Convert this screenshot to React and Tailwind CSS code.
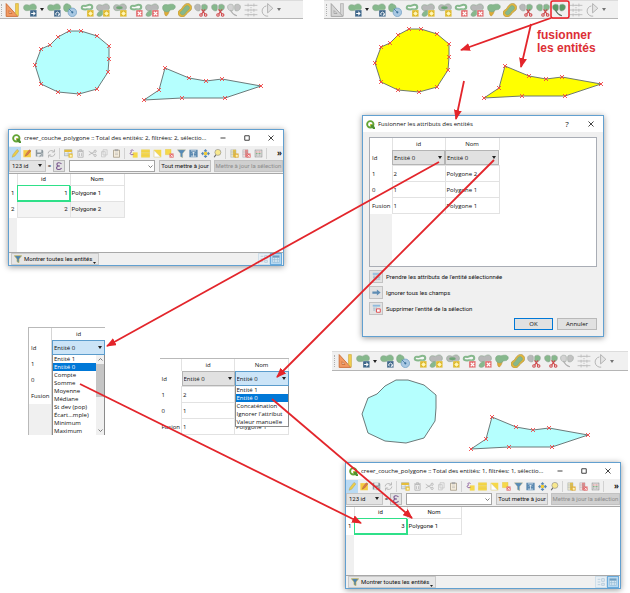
import React from "react";

const GREEN = "#86b88c";
const GREY = "#b8b8b8";

const circlePoints = [
  [35, 65], [41, 49], [50, 45], [58, 37], [69, 31], [81, 31], [97, 36],
  [109, 46], [109, 59], [108, 72], [97, 89], [79, 94], [58, 92], [41, 84],
];

const trianglePoints = [
  [144, 100], [159, 90], [165, 68], [189, 78], [206, 81], [222, 79],
  [261, 86], [225, 98], [182, 98],
];

const Shape = ({ points, fill, nodes = true }) => (
  <g>
    <polygon points={points.join(" ")} fill={fill} stroke="#5f6b6b" strokeWidth="0.9" />
    {nodes &&
      points.map(([x, y]) => (
        <path
          key={`${x}-${y}`}
          d={`M${x - 2} ${y - 2}l4 4M${x + 2} ${y - 2}l-4 4`}
          stroke="#f24545"
          strokeWidth="0.9"
        />
      ))}
  </g>
);

const MapCanvas = ({ className, viewBox, fill, circleNodes }) => (
  <svg className={`block ${className}`} viewBox={viewBox} preserveAspectRatio="xMinYMin meet">
    <Shape points={circlePoints} fill={fill} nodes={circleNodes} />
    <Shape points={trianglePoints} fill={fill} />
  </svg>
);

/* ---------- digitizing toolbar ---------- */

const Blob = ({ fill = GREEN, ring = false }) => (
  <path
    d={
      ring
        ? "M3 8c0-3 3-4 6-3 3 0 4-2 7-2 3 0 5 2 5 4s-2 4-5 4c-3-1-4 0-7 0s-6 0-6-3z"
        : "M1 8c0-5 4-6 8-4.500 3 1 4-1.500 8-2 4 0 6 3 6 6s-2 6-6 5c-3-.500-4 0-8 .500-4 .500-8-.500-8-5z"
    }
    fill={ring ? "#f7f7f7" : fill}
    stroke={ring ? fill : "#8aa78d"}
    strokeWidth={ring ? 3.5 : 1}
  />
);

const Badge = ({ color, children }) => (
  <g>
    <rect x="12" y="12" width="11.500" height="11.500" rx="1" fill={color} stroke="#f0f0f0" strokeWidth="0.600" />
    {children}
  </g>
);

const arrowMark = <path d="M14 18h6M17.500 15l3 3-3 3" stroke="#fff" strokeWidth="1.800" fill="none" />;
const turnMark = <path d="M16 21a3 3 0 1 1 4 0M18.500 21h2.500v-2.500" stroke="#fff" strokeWidth="1.600" fill="none" />;
const starMark = (
  <>
    <circle cx="18" cy="18" r="2.600" fill="#fff6b8" />
    <path d="M18 14v8M14 18h8M15.200 15.200l5.600 5.600M20.800 15.200l-5.600 5.600" stroke="#fff6b8" strokeWidth="1" />
  </>
);
const crossMark = <path d="M15 15l6 6M21 15l-6 6" stroke="#fff" strokeWidth="2" />;

const scissors = (
  <g fill="none" stroke="#cf4447" strokeWidth="1.800">
    <path d="M13 11l6 8M19 11l-6 8" />
    <circle cx="12" cy="20.500" r="2.200" />
    <circle cx="20" cy="20.500" r="2.200" />
  </g>
);

const twins = (left, right) => (
  <g stroke="#8f9a90" strokeWidth="0.800">
    <path d="M1 7c0-5 5-6 9-4 1.500 1 1 9 0 10-4 2-9-1-9-6z" fill={left} />
    <path d="M23 7c0-5-5-6-9-4-1.500 1-1 9 0 10 4 2 9-1 9-6z" fill={right} />
  </g>
);

const tail = (fill) => <path d="M6 14c3-2 7-1 7 1 0 4-3 8-7 8-4 0-5-2-4-4s2-4 4-5z" fill={fill} stroke="#8a9a8c" strokeWidth="0.800" />;

const digitizingTools = [
  { name: "Déplacer l'entité", art: <><Blob /><Badge color="#3f678a">{turnMark}</Badge></> },
  {
    name: "Pivoter l'entité",
    art: (
      <>
        <path d="M1 8c0-5 4-8 8-6 4 1 5 4 5 7s-3 6-7 6-6-3-6-7z" fill={GREEN} stroke="#7ba781" />
        <circle cx="16" cy="16" r="7.300" fill="#a9c8e2" stroke="#6b9cc4" strokeWidth="1.200" />
        <path d="M10 10l6 6" stroke="#39709b" strokeWidth="1.200" />
        <circle cx="16" cy="16" r="1.800" fill="#39709b" />
      </>
    ),
  },
  { name: "Ajouter un anneau", art: <><Blob ring /><Badge color="#dfb92a">{starMark}</Badge></> },
  { name: "Ajouter une partie", art: <><Blob fill={GREY} />{tail(GREEN)}<Badge color="#dfb92a">{starMark}</Badge></> },
  {
    name: "Remplir l'anneau",
    art: (
      <>
        <Blob fill={GREY} />
        <ellipse cx="11" cy="8" rx="5.500" ry="2.500" fill="#6fa675" />
        <Badge color="#dfb92a">{starMark}</Badge>
      </>
    ),
  },
  { name: "Effacer un anneau", art: <><Blob ring /><Badge color="#e3696b">{crossMark}</Badge></> },
  { name: "Effacer une partie", art: <><Blob fill={GREY} />{tail(GREEN)}<Badge color="#e3696b">{crossMark}</Badge></> },
  {
    name: "Remodeler les entités",
    art: (
      <>
        <path d="M4 9h9c0 5-2 10-5 13-4 1-4-7-4-13z" fill="#e0ac35" stroke="#b58c32" />
        <path d="M1 8c0-5 4-6 8-5 3 0 4-1 8-1 5 0 7 4 5 7s-4 2-8 3c-2 4-7 4-10 2-2-1-3-4-3-6z" fill={GREEN} stroke="#7ba781" />
      </>
    ),
  },
  {
    name: "Décaler la courbe",
    art: (
      <g transform="rotate(-45 12 12)">
        <path d="M-2 12c0-7 6-7 9-6s5-1 9-1 9 1 9 7-5 8-9 7-6 0-9 0-9 0-9-7z" fill="#e2b53a" stroke="#a98f3c" />
        <path d="M2 12c0-4 4-3 7-3s4-1 7-1 5 1 5 4-2 4-5 4-4-1-7 0-7 0-7-4z" fill={GREEN} stroke="#7ba781" />
      </g>
    ),
  },
  { name: "Séparer les entités", art: <>{twins(GREY, GREEN)}{scissors}</> },
  { name: "Séparer les parties", art: <>{twins(GREEN, GREEN)}{scissors}</> },
  { name: "Fusionner les entités", merge: true },
  {
    name: "Fusionner les attributs",
    art: (
      <g fill="none" stroke="#bcbcbc" strokeWidth="1.600">
        <path d="M1 4h22M1 12h22M1 20h22M7 1v5M17 1v5M7 10v5M17 10v5M7 18v5M17 18v5" />
        <path d="M12 3v18" strokeDasharray="2 2" />
      </g>
    ),
  },
  {
    name: "Pivoter les symboles",
    art: (
      <g fill="#e4e4e4" stroke="#b0b0b0" strokeWidth="1.600">
        <path d="M14 22.500A8.500 8.500 0 1 1 11 5" fill="none" />
        <path d="M13 1l9 8-9 8z" />
      </g>
    ),
  },
];

const mergeArt = (active) => (
  <>
    {twins(active ? "#5b9a66" : "#d2d2d2", active ? "#5b9a66" : "#c2c2c2")}
    <path d="M6 12c2 5 5 8 11 10" fill="none" stroke={active ? "#5a6b5c" : "#adadad"} strokeWidth="1.800" />
  </>
);

const ToolButton = ({ name, children }) => (
  <button aria-label={name} className="shrink-0">
    <svg className="block size-[14px]" viewBox="0 0 24 24">{children}</svg>
  </button>
);

const Caret = () => (
  <svg className="block h-[3px] w-1 shrink-0" viewBox="0 0 8 6"><path d="M0 0h8L4 6z" fill="#222" /></svg>
);

const DigitizingToolbar = ({ className, rulerOff = false, mergeOn = false }) => (
  <div
    role="toolbar"
    aria-label="Numérisation avancée"
    className={`flex items-center border-t border-b border-t-[#dcdcdc] border-b-[#b5b5b5] bg-[#f0f0f0] ${className}`}
  >
    <span className="mr-[3px] h-3 border-l border-dotted border-[#b0b0b0]" />
    <ToolButton name="Outils de numérisation">
      <path
        d="M2 1v22h20z M7 13v5h5z"
        fill={rulerOff ? "#d5d5d5" : "#f29a62"}
        stroke={rulerOff ? "#a0a0a0" : "#c96b35"}
        strokeWidth="1.500"
        fillRule="evenodd"
      />
      <path
        d="M18 1h5v21h-1l-4-4z"
        fill={rulerOff ? "#d5d5d5" : "#f2cd4e"}
        stroke={rulerOff ? "#a0a0a0" : "#c8a53b"}
      />
    </ToolButton>
    <div className="mr-[3px] ml-1 flex items-center gap-[3px]">
      <ToolButton name="Copier et déplacer l'entité"><Blob /><Badge color="#3f678a">{arrowMark}</Badge></ToolButton>
      <Caret />
    </div>
    <div className="flex flex-1 items-center justify-between">
      {digitizingTools.map((tool) => (
        <ToolButton key={tool.name} name={tool.name}>
          {tool.merge ? mergeArt(mergeOn) : tool.art}
        </ToolButton>
      ))}
    </div>
    <span className="ml-[3px] opacity-60"><Caret /></span>
  </div>
);

/* ---------- attribute table window ---------- */

const tableTools = [
  { name: "Mode édition", on: true, art: <path d="M3 22l2-7L16 1l5 4L10 19z" fill="#ecce48" stroke="#a8944a" /> },
  {
    name: "Édition multiple",
    art: (
      <>
        <rect x="1" y="3" width="20" height="19" fill="#f5cb42" />
        <path d="M6 19l2-6 9-11 4 3-9 11z" fill="#dc7a4c" stroke="#9a5a3c" />
      </>
    ),
  },
  {
    name: "Enregistrer",
    art: (
      <>
        <path d="M2 2h18l2 3v15H2z" fill="#8a969c" />
        <path d="M6 2h11v7H6zM6 13h12v7H6z" fill="#e5e9eb" />
        <path d="M10 22l2-5 7-6 3 3-7 7z" fill="#9aa4a9" stroke="#f0f0f0" />
      </>
    ),
  },
  {
    name: "Actualiser",
    art: (
      <g fill="none" stroke="#b8b8b8" strokeWidth="2.500">
        <path d="M3 12a9 8 0 0 1 16-5M21 12a9 8 0 0 1-16 5" />
        <path d="M20 1v7h-7M4 23v-7h7" />
      </g>
    ),
    sep: true,
  },
  {
    name: "Ajouter une entité",
    art: (
      <>
        <path d="M1 2h20v16H1z" fill="#e8edf0" stroke="#8b9ba5" strokeWidth="1.500" />
        <path d="M1 2h20v6H1z" fill="#e6bd3a" />
        <path d="M2 13h19M11 8v10" stroke="#8b9ba5" />
        <path d="M12 12h11v11H12z" fill="#e6bd3a" />
        {starMark}
      </>
    ),
  },
  {
    name: "Supprimer",
    art: <path d="M5 7h14v15H5zM3 5h18M9 4V2h6v3M9 11v8M15 11v8" fill="none" stroke="#adadad" strokeWidth="2" />,
  },
  {
    name: "Couper",
    art: (
      <g fill="none" stroke="#adadad" strokeWidth="2">
        <path d="M2 6l14 9M2 16l14-8" />
        <circle cx="19" cy="6" r="3" />
        <circle cx="19" cy="17" r="3" />
      </g>
    ),
  },
  { name: "Copier", art: <path d="M8 2h11v14H8zM4 7h10v14H4z" fill="#efefef" stroke="#c0c0c0" strokeWidth="1.800" /> },
  {
    name: "Coller",
    art: (
      <>
        <path d="M4 3h16v19H4z" fill="#f4ecdc" stroke="#a09580" strokeWidth="2" />
        <path d="M8 1h8v4H8zM8 11h8M8 15h8" fill="#a5a5a5" stroke="#a5a5a5" strokeWidth="1.300" />
      </>
    ),
    sep: true,
  },
  {
    name: "Sélectionner par expression",
    art: (
      <>
        <path d="M10 9h13v14H10z" fill="#f6d84a" />
        <path d="M12 4C7 0 2 5 7 8c-7 2-4 10 5 6" fill="none" stroke="#8a5a9c" strokeWidth="2.500" />
      </>
    ),
  },
  { name: "Tout sélectionner", art: <path d="M1 2h22v6H1zM1 9h22v6H1zM1 16h22v6H1z" fill="#f6d84a" stroke="#e5c437" /> },
  {
    name: "Inverser la sélection",
    art: (
      <>
        <path d="M2 2h20v20H2z" fill="#f6d84a" />
        <path d="M3 21V4l17 17z" fill="#fff" stroke="#c4c4c4" />
      </>
    ),
  },
  {
    name: "Tout désélectionner",
    art: (
      <>
        <path d="M1 1h15v14H1z" fill="#f6d84a" stroke="#dfc03c" />
        <path d="M12 12h11v11H12z" fill="#e3696b" />
        {crossMark}
      </>
    ),
  },
  { name: "Filtrer", art: <path d="M1 2h22l-8 10v11l-6-3v-8z" fill="#568bb9" stroke="#c9b978" /> },
  {
    name: "Déplacer la sélection en haut",
    art: (
      <>
        <path d="M1 2h22v20H1z" fill="#5a88b0" />
        <path d="M5 5h14M12 20V8M8 12l4-4 4 4M5 19h14" stroke="#f0f4f7" strokeWidth="2" fill="none" />
      </>
    ),
  },
  {
    name: "Centrer la carte",
    art: (
      <>
        <path d="M12 0l5 5-5 3-5-3zM12 24l5-5-5-3-5 3zM0 12l5-5 3 5-3 5zM24 12l-5-5-3 5 3 5z" fill="#5a88b0" />
        <path d="M8 8h8v8H8z" fill="#f1cd3b" />
      </>
    ),
  },
  {
    name: "Zoomer sur la sélection",
    art: (
      <>
        <path d="M8 15l-5 7" stroke="#666" strokeWidth="3" />
        <circle cx="13" cy="9" r="8" fill="#f8e88e" stroke="#888" strokeWidth="1.600" />
      </>
    ),
    sep: true,
  },
  {
    name: "Nouveau champ",
    art: (
      <>
        <path d="M2 2h14v20H2z" fill="#e9e3c9" stroke="#93a0a8" />
        <path d="M8 2h8v20H8z" fill="#e2c04a" />
        <path d="M2 8h13M2 14h13" stroke="#93a0a8" />
        <path d="M12 12h11v11H12z" fill="#e0ab35" />
        {starMark}
      </>
    ),
  },
  {
    name: "Supprimer le champ",
    art: (
      <>
        <path d="M2 2h14v20H2z" fill="#f1dcdc" stroke="#93a0a8" />
        <path d="M8 2h8v20H8z" fill="#e08a8b" />
        <path d="M2 8h13M2 14h13" stroke="#93a0a8" />
        <path d="M12 12h11v11H12z" fill="#e3696b" />
        {crossMark}
      </>
    ),
  },
  {
    name: "Calculatrice de champ",
    art: (
      <g strokeWidth="2" fill="none">
        <path d="M3 2v20M21 2v20M3 21h18M3 3h18" stroke="#9a9a9a" />
        <path d="M5 8h14" stroke="#cf5c5c" strokeDasharray="3 1" />
        <path d="M5 12h14" stroke="#5fa067" strokeDasharray="3 1" />
        <path d="M5 16h14" stroke="#777" strokeDasharray="3 1" />
      </g>
    ),
    sep: true,
  },
];

const QgisLogo = () => (
  <svg className="block size-[9px] shrink-0" viewBox="0 0 24 24">
    <circle cx="11.500" cy="11.500" r="8.500" fill="none" stroke="#63a535" strokeWidth="5" />
    <path d="M11 11h6l7 8v5h-5l-8-8z" fill="#4f9130" />
    <path d="M11 11l5 0-5 5z" fill="#f0c52e" />
  </svg>
);

const winGlyphs = {
  min: { label: "Réduire", d: "M1 6h10" },
  max: { label: "Agrandir", d: "M1.500 1.500h9v9h-9z" },
  close: { label: "Fermer", d: "M1 1l10 10M11 1L1 11" },
};

const TitleBar = ({ title, buttons, className = "" }) => (
  <div className={`flex items-center bg-white pl-[3px] ${className}`}>
    <QgisLogo />
    <h2 className="ml-[3px] flex-1 truncate">{title}</h2>
    {buttons.map((b) => (
      <button key={b} aria-label={winGlyphs[b]?.label || "Aide"} className="flex w-6 items-center justify-center">
        {winGlyphs[b] ? (
          <svg className="block size-[6px]" viewBox="0 0 12 12">
            <path d={winGlyphs[b].d} fill="none" stroke="#222" strokeWidth="1.700" />
          </svg>
        ) : (
          <span className="text-[8px]">?</span>
        )}
      </button>
    ))}
  </div>
);

const FunnelIcon = () => (
  <svg className="block size-[8px]" viewBox="0 0 24 24"><path d="M1 2h22l-8 10v11l-6-3v-8z" fill="#4a82b4" stroke="#c9b44e" strokeWidth="2" /></svg>
);

const AttributeWindow = ({ title, rows, className, bodyClass }) => (
  <section className={`border border-[#62a0d0] bg-[#f0f0f0] shadow-[0_1px_6px_rgba(0,0,0,0.4)] ${className}`}>
    <TitleBar title={title} buttons={["min", "max", "close"]} className="h-4" />
    <div className="flex h-[14px] items-center">
      {tableTools.map((tool) => (
        <React.Fragment key={tool.name}>
          <button
            aria-label={tool.name}
            className={`flex h-[13px] w-3 shrink-0 items-center justify-center ${tool.on ? "bg-[#b9daf3]" : ""}`}
          >
            <svg className="block size-[9px]" viewBox="0 0 24 24">{tool.art}</svg>
          </button>
          {tool.sep && <span className="mx-[2px] h-[11px] w-px shrink-0 bg-[#d2d2d2]" />}
        </React.Fragment>
      ))}
      <span className="mr-px ml-auto text-[8px] font-bold">»</span>
    </div>
    <div className="flex h-[14px] items-center border-b border-[#a8a8a8] pb-px font-['Roboto',sans-serif]">
      <div className="relative h-3 w-[37px]">
        <select
          aria-label="Champ"
          defaultValue="id"
          className="block h-full w-full appearance-none border border-[#c4c4c4] bg-[#e3e3e3] pl-[2px] text-[6px]"
        >
          <option value="id">123 id</option>
        </select>
        <span className="pointer-events-none absolute top-1 right-1"><Caret /></span>
      </div>
      <span className="w-[7px] text-center font-bold">=</span>
      <button aria-label="Expression" className="flex h-3 w-3 items-center justify-center border border-[#b9b9b9] bg-[#e3e3e3] text-[#7b5a90]">
        <svg className="block size-[8px]" viewBox="0 0 16 16">
          <path d="M13 4C10 0 3 1 4 5c0 2 3 3 6 3-4 0-7 1-7 4 0 4 8 4 10 0" fill="none" stroke="currentColor" strokeWidth="2.200" />
        </svg>
      </button>
      <div className="relative mx-1 h-3 flex-1">
        <input aria-label="Valeur" className="block h-full w-full border border-[#a5a5a5] bg-white px-px" />
        <svg className="pointer-events-none absolute top-[5px] right-[2px] h-[3px] w-[5px]" viewBox="0 0 10 6"><path d="M1 1l4 4 4-4" fill="none" stroke="#555" strokeWidth="1.500" /></svg>
      </div>
      <button className="h-3 w-[52px] border border-[#c0c0c0] bg-[#e3e3e3] whitespace-nowrap">Tout mettre à jour</button>
      <button disabled className="ml-[3px] h-3 w-[69px] border border-[#c2c2c2] bg-[#cfcfcf] whitespace-nowrap text-[#8c8c8c]">
        Mettre à jour la sélection
      </button>
    </div>
    <div className={`flex bg-white ${bodyClass}`}>
      <div className="flex w-full flex-col font-['Roboto',sans-serif]">
        <table className="w-[115px] table-fixed border-collapse">
          <thead>
            <tr className="h-[11px]">
              <th className="w-2" />
              <th className="w-[53px] border-x border-[#e2e2e2] font-normal">id</th>
              <th className="w-[54px] border-r border-[#e2e2e2] font-normal">Nom</th>
            </tr>
          </thead>
          <tbody>
            {rows.map((row, i) => (
              <tr key={row.nom} className={`h-4 ${i % 2 ? "bg-[#f4f4f4]" : ""}`}>
                <th className="bg-white p-0 font-normal">{i + 1}</th>
                <td className={`p-0 pr-[2px] text-right ${i === 0 ? "border border-[#2fe089] outline -outline-offset-1 outline-[#2fe089]" : "border border-[#e2e2e2]"}`}>
                  {row.id}
                </td>
                <td className="border border-[#e2e2e2] p-0 pl-px whitespace-nowrap">{row.nom}</td>
              </tr>
            ))}
          </tbody>
        </table>
        <div className="w-2 flex-1 bg-[#f0f0f0]" />
      </div>
    </div>
    <div className="flex h-[13px] items-center border-t border-[#a8a8a8]">
      <button className="ml-[2px] flex h-3 items-center gap-[2px] border border-[#c9c9c9] bg-[#e6e6e6] px-[2px] font-['Roboto',sans-serif] whitespace-nowrap">
        <FunnelIcon />
        Montrer toutes les entités
        <svg className="-ml-px block size-[3px] self-end" viewBox="0 0 6 6"><path d="M0 2h6L3 6z" fill="#222" /></svg>
      </button>
      <button aria-label="Vue formulaire" className="ml-auto flex h-3 w-3 items-center justify-center border border-[#cfdfea] bg-[#e8eff4]">
        <svg className="block size-[8px]" viewBox="0 0 12 12"><path d="M1 2h4M1 6h4M1 10h4M7 1h4v4H7zM7 8h4v3H7z" stroke="#a5c0d3" fill="none" /></svg>
      </button>
      <button aria-label="Vue table" className="mr-px flex h-3 w-3 items-center justify-center border border-[#6aabdc] bg-[#b6d9f2]">
        <svg className="block size-[8px]" viewBox="0 0 12 12">
          <path d="M1 1h10v10H1zM4 4v7M8 4v7M1 7h10" stroke="#93b9d4" fill="#dcecf7" />
          <path d="M1 1h10v3H1z" fill="#6e9dc0" />
        </svg>
      </button>
    </div>
  </section>
);

/* ---------- merge tables ---------- */

const EntitySelect = ({ label, open = false }) => (
  <div className="relative h-[15px]">
    <select
      aria-label={label}
      defaultValue="0"
      className={`block h-full w-full appearance-none border pl-px text-[6px] ${
        open ? "border-[#5b9ccc] bg-[#cbe4f7]" : "border-[#b4b4b4] bg-[#e1e1e1]"
      }`}
    >
      <option value="0">Entité 0</option>
    </select>
    <span className="pointer-events-none absolute top-[6px] right-[3px]"><Caret /></span>
  </div>
);

const OptionList = ({ options, label, className }) => (
  <ul role="listbox" aria-label={label} className={`bg-white leading-[8px] ${className}`}>
    {options.map((o) => (
      <li
        key={o}
        role="option"
        aria-selected={o === "Entité 0"}
        className={`h-2 pl-px whitespace-nowrap ${o === "Entité 0" ? "bg-[#0078d7] text-white" : ""}`}
      >
        {o}
      </li>
    ))}
  </ul>
);

const mergeRows = [
  ["1", "2", "Polygone 2"],
  ["0", "1", "Polygone 1"],
  ["Fusion", "1", "Polygone 1"],
];

// rows whose name lies behind the opened list
const coveredRows = [
  ["1", "2", ""],
  ["0", "1", ""],
  ["Fusion", "1", "Polygone 1"],
];

const MergeTable = ({ rows = mergeRows, open, children }) => (
  <table className="w-[129px] table-fixed border-collapse bg-white">
    <thead>
      <tr className="h-3">
        <th className="w-[22px]" />
        <th className="w-[53px] border-l border-[#e2e2e2] font-normal">id</th>
        <th className="w-[54px] border-x border-[#e2e2e2] font-normal">Nom</th>
      </tr>
    </thead>
    <tbody>
      <tr>
        <th className="p-0 pl-[2px] text-left font-normal">Id</th>
        <td className="p-0"><EntitySelect label="Entité pour id" /></td>
        <td className="relative p-0">
          <EntitySelect label="Entité pour Nom" open={open} />
          {children}
        </td>
      </tr>
      {rows.map(([head, id, nom]) => (
        <tr key={head} className="h-4">
          <th className="p-0 pl-[2px] text-left font-normal">{head}</th>
          <td className="border border-[#e2e2e2] p-0 pl-px">{id}</td>
          <td className="border border-[#e2e2e2] p-0 pl-px whitespace-nowrap">{nom}</td>
        </tr>
      ))}
    </tbody>
  </table>
);

const dialogActions = [
  {
    label: "Prendre les attributs de l'entité sélectionnée",
    art: (
      <>
        <path d="M2 2h20v6H2z" fill="#9cc3e0" />
        <path d="M3 11h5M3 15h5M3 19h5M11 9v13M14 11h8M14 15h8M14 19h8" stroke="#8aa9c2" strokeWidth="2" fill="none" />
      </>
    ),
  },
  {
    label: "Ignorer tous les champs",
    art: <path d="M1 9h12V4l10 8-10 8v-5H1z" fill="#5f8db4" />,
  },
  {
    label: "Supprimer l'entité de la sélection",
    art: (
      <>
        <path d="M2 2h20v5H2z" fill="#8fbbdc" />
        <path d="M3 11h5M3 16h5M11 9v12" stroke="#8aa9c2" strokeWidth="2" />
        <path d="M12 13h10v9H12z" fill="#fff" stroke="#e04c4f" strokeWidth="2.500" />
      </>
    ),
  },
];

const MergeDialog = () => (
  <section
    role="dialog"
    aria-label="Fusionner les attributs des entités"
    className="mr-[26px] ml-[38px] border border-[#62a0d0] bg-[#f0f0f0] shadow-[0_1px_6px_rgba(0,0,0,0.4)]"
  >
    <TitleBar title="Fusionner les attributs des entités" buttons={["help", "close"]} className="h-4" />
    <div className="px-[6px] pt-[5px] pb-[6px]">
      <div className="flex min-h-[130px] flex-col border border-[#a9adb5] bg-white">
        <MergeTable />
        <div className="w-[22px] flex-1 bg-[#f0f0f0]" />
      </div>
      <div className="mt-[3px] flex flex-col gap-[3px] font-['Roboto',sans-serif]">
        {dialogActions.map((a) => (
          <label key={a.label} className="flex items-center gap-[3px]">
            <button aria-label={a.label} className="flex h-[13px] w-[14px] items-center justify-center border border-[#c2c2c2] bg-[#e3e3e3]">
              <svg className="block size-[9px]" viewBox="0 0 24 24">{a.art}</svg>
            </button>
            {a.label}
          </label>
        ))}
      </div>
      <div className="mt-[3px] flex justify-end gap-1">
        <button className="h-3 w-[39px] border border-[#0078d7] bg-[#e1e1e1]">OK</button>
        <button className="h-3 w-10 border border-[#b9b9b9] bg-[#e1e1e1]">Annuler</button>
      </div>
    </div>
  </section>
);

const statOptions = [
  "Entité 1", "Entité 0", "Compte", "Somme", "Moyenne", "Médiane",
  "St dev (pop)", "Écart...mple)", "Minimum", "Maximum",
];

const nameOptions = ["Entité 1", "Entité 0", "Concaténation", "Ignorer l'attribut", "Valeur manuelle"];

const IdDropdown = () => (
  <div className="flex w-[77px] border-t border-l border-[#b9b9b9] bg-[#f0f0f0]">
    <div className="w-[22px]">
      <div className="h-3 bg-white" />
      {["Id", "1", "0", "Fusion"].map((t) => (
        <p key={t} className="h-4 bg-white pl-[2px] leading-4">{t}</p>
      ))}
    </div>
    <div className="flex-1 border-l border-[#d5d5d5]">
      <p className="h-3 bg-white text-center leading-3">id</p>
      <EntitySelect label="Statistique pour id" open />
      <div className="flex border-x border-[#8b8b8b] bg-white">
        <OptionList label="Statistiques" options={statOptions} className="flex-1" />
        <div className="flex w-2 flex-col items-center justify-between bg-[#f0f0f0]">
          <svg className="my-[3px] block h-[3px] w-[5px]" viewBox="0 0 10 6"><path d="M1 5l4-4 4 4" fill="none" stroke="#555" strokeWidth="1.500" /></svg>
          <span className="mb-auto h-[33px] w-full bg-[#c5c5c5]" />
          <svg className="my-[3px] block h-[3px] w-[5px]" viewBox="0 0 10 6"><path d="M1 1l4 4 4-4" fill="none" stroke="#555" strokeWidth="1.500" /></svg>
        </div>
      </div>
    </div>
  </div>
);

/* ---------- annotations ---------- */

const arrows = [
  [551, 18, 461, 50],
  [531, 24, 521, 67],
  [464, 81, 456, 119],
  [439, 162, 107, 346],
  [494, 160, 277, 377],
  [80, 384, 361, 523],
  [272, 399, 412, 518],
];

const Annotations = () => (
  <svg className="pointer-events-none absolute top-0 left-0 z-20 h-[593px] w-full" viewBox="0 0 630 593" preserveAspectRatio="none">
    <defs>
      <marker id="head" viewBox="0 0 10 8" refX="9" refY="4" markerWidth="10" markerHeight="8" markerUnits="userSpaceOnUse" orient="auto">
        <path d="M0 0L10 4 0 8z" fill="#e3252b" />
      </marker>
    </defs>
    <rect x="551" y="1" width="18" height="17" rx="2" fill="none" stroke="#ee1c24" strokeWidth="1.500" />
    {arrows.map(([x1, y1, x2, y2]) => (
      <line key={`${x1}-${x2}`} x1={x1} y1={y1} x2={x2} y2={y2} stroke="#e3252b" strokeWidth="1.800" markerEnd="url(#head)" />
    ))}
  </svg>
);

export default function App() {
  return (
    <main className="relative grid grid-cols-[324px_1fr] overflow-hidden bg-white font-['Open_Sans',sans-serif] text-[6px] leading-[8px] text-[#111]">
      <div>
        <DigitizingToolbar className="mr-[21px] h-[19px] pr-[22px] pl-px" />
        <MapCanvas className="h-[110px] w-full" viewBox="0 19 324 110" fill="#b5fffe" />
        <AttributeWindow
          title="creer_couche_polygone :: Total des entités: 2, filtrées: 2, sélectio..."
          rows={[{ id: 1, nom: "Polygone 1" }, { id: 2, nom: "Polygone 2" }]}
          className="mr-10 ml-2"
          bodyClass="min-h-[78px]"
        />
        <div className="mt-[61px] mr-[35px] ml-7 flex items-end justify-between">
          <IdDropdown />
          <div className="border-t border-[#b9b9b9]">
            <MergeTable open rows={coveredRows}>
              <OptionList
                label="Valeurs pour Nom"
                options={nameOptions}
                className="absolute top-[15px] left-0 z-10 w-full border-x border-b border-[#8b8b8b]"
              />
            </MergeTable>
          </div>
        </div>
      </div>
      <div className="relative">
        <DigitizingToolbar className="mr-3 h-[19px] pr-3 pl-[2px]" rulerOff mergeOn />
        <MapCanvas className="h-24 w-full" viewBox="-16 21 306 96" fill="#ffff00" />
        <p className="absolute top-[29px] left-[213px] font-['Liberation_Sans',sans-serif] text-[12px] leading-[13px] font-bold text-[#dc2f36]">
          fusionner
          <br />
          les entités
        </p>
        <MergeDialog />
        <DigitizingToolbar className="mt-[14px] mr-[2px] ml-2 h-5 pr-[14px] pl-[2px]" />
        <MapCanvas className="h-[91px] w-full" viewBox="-3 22 306 91" fill="#b5fffe" circleNodes={false} />
        <AttributeWindow
          title="creer_couche_polygone :: Total des entités: 1, filtrées: 1, sélectio..."
          rows={[{ id: 3, nom: "Polygone 1" }]}
          className="mr-[9px] mb-1 ml-[21px]"
          bodyClass="min-h-[68px]"
        />
      </div>
      <Annotations />
    </main>
  );
}
